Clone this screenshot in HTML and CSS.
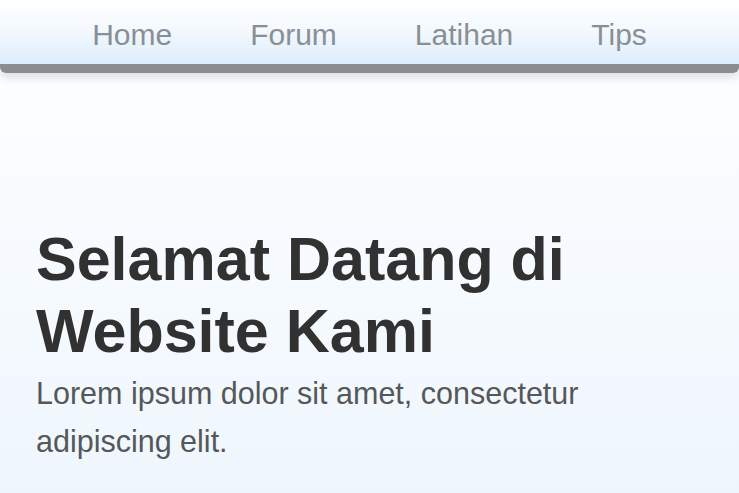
FILE: index.html
```html
<!DOCTYPE html>
<html lang="id">
<head>
<meta charset="utf-8">
<title>Selamat Datang</title>
<link rel="stylesheet" href="styles.css">
</head>
<body>
<header class="nav">
  <ul class="nav-list">
    <li><a class="nav-link" href="#">Home</a></li>
    <li><a class="nav-link" href="#">Forum</a></li>
    <li><a class="nav-link" href="#">Latihan</a></li>
    <li><a class="nav-link" href="#">Tips</a></li>
  </ul>
</header>
<main class="hero">
  <h1 class="hero-title">Selamat Datang di Website Kami</h1>
  <p class="hero-text">Lorem ipsum dolor sit amet, consectetur adipiscing elit.</p>
</main>
</body>
</html>
```
FILE: styles.css
```css
html, body {
  margin: 0;
  padding: 0;
}
body {
  font-family: "Liberation Sans", Arial, sans-serif;
  background: linear-gradient(180deg, #ffffff 0%, #fbfdff 25%, #eef6fd 100%);
  min-height: 493px;
  overflow: hidden;
}
.nav {
  position: relative;
  z-index: 1;
  background: linear-gradient(180deg, #ffffff 0%, #f4f9fe 45%, #dcedfb 100%);
  border-bottom: 9px solid #8b8c8d;
  border-radius: 0 0 6px 6px;
  box-shadow: 0 5px 10px rgba(0, 0, 0, 0.12);
}
.nav-list {
  list-style: none;
  margin: 0;
  padding: 20px 0 14px;
  display: flex;
  justify-content: center;
  gap: 78px;
}
.nav-link {
  display: block;
  font-size: 30px;
  line-height: 30px;
  color: #8a8f95;
  text-decoration: none;
}
.hero {
  padding: 150px 36px 0;
}
.hero-title {
  margin: 0 0 2px;
  font-size: 61px;
  line-height: 72px;
  font-weight: bold;
  color: #313131;
  max-width: 570px;
}
.hero-text {
  margin: 0;
  font-size: 30.5px;
  line-height: 48px;
  color: #555759;
  max-width: 570px;
}
```
